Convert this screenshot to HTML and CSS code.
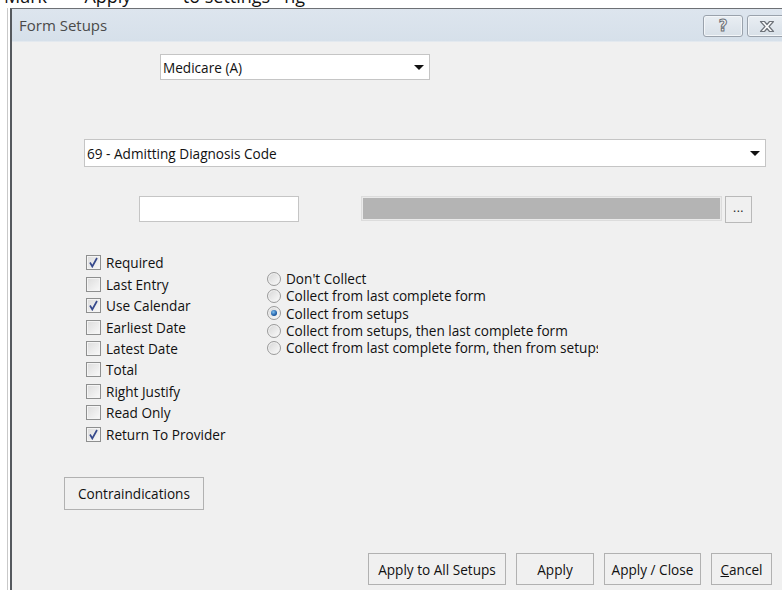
FILE: index.html
```html
<!DOCTYPE html>
<html lang="en">
<head>
<meta charset="utf-8">
<title>Form Setups</title>
<link rel="stylesheet" href="styles.css">
</head>
<body>
  <div class="behind">
    <span class="behind-text">Mark&nbsp;&nbsp;&nbsp;&nbsp;&nbsp;&nbsp;&nbsp;&nbsp;Apply&nbsp;&nbsp;&nbsp;&nbsp;&nbsp;&nbsp;&nbsp;&nbsp;&nbsp;&nbsp;&nbsp;to settings&nbsp;&nbsp;&nbsp;ng</span>
  </div>
  <div class="desk">
    <div class="desk-edge"></div>
    <section class="dialog">
      <header class="titlebar">
        <span class="title">Form Setups</span>
        <div class="caption-buttons">
          <button class="cap-btn help" type="button"><span>?</span></button>
          <button class="cap-btn close" type="button">
            <svg width="16" height="13" viewBox="0 0 16 13"><path d="M1.5 1.5h4l2.5 3 2.5-3h4l-4.5 5 4.5 5h-4l-2.5-3-2.5 3h-4l4.5-5z" fill="#fdfdfd" stroke="#6f747b" stroke-width="1.2" stroke-linejoin="round"/></svg>
          </button>
        </div>
      </header>

      <div class="content">
        <div class="select select-form">
          <span class="select-text">Medicare (A)</span>
          <span class="arrow"></span>
        </div>

        <div class="select select-field">
          <span class="select-text">69 - Admitting Diagnosis Code</span>
          <span class="arrow"></span>
        </div>

        <div class="value-row">
          <div class="textbox"></div>
          <div class="lookup"></div>
          <button class="ellipsis" type="button">...</button>
        </div>

        <div class="options">
          <ul class="checks">
            <li><span class="check on"></span>Required</li>
            <li><span class="check"></span>Last Entry</li>
            <li><span class="check on"></span>Use Calendar</li>
            <li><span class="check"></span>Earliest Date</li>
            <li><span class="check"></span>Latest Date</li>
            <li><span class="check"></span>Total</li>
            <li><span class="check"></span>Right Justify</li>
            <li><span class="check"></span>Read Only</li>
            <li><span class="check on"></span>Return To Provider</li>
          </ul>
          <ul class="radios">
            <li><span class="radio"></span>Don't Collect</li>
            <li><span class="radio"></span>Collect from last complete form</li>
            <li><span class="radio on"></span>Collect from setups</li>
            <li><span class="radio"></span>Collect from setups, then last complete form</li>
            <li><span class="radio"></span>Collect from last complete form, then from setups</li>
          </ul>
        </div>

        <button class="btn contra" type="button">Contraindications</button>

        <div class="actions">
          <button class="btn all" type="button">Apply to All Setups</button>
          <button class="btn apply" type="button">Apply</button>
          <button class="btn close-apply" type="button">Apply / Close</button>
          <button class="btn cancel" type="button"><u>C</u>ancel</button>
        </div>
      </div>
    </section>
  </div>
</body>
</html>
```
FILE: styles.css
```css
html, body {
  margin: 0;
  padding: 0;
  background: #ffffff;
  overflow: hidden;
  width: 782px;
  height: 590px;
}

body {
  font-family: "Open Sans", "Noto Sans", sans-serif;
  font-size: 13.6px;
  color: #111;
}

/* window partially hidden behind the dialog: only the bottoms of its letters show */
.behind {
  height: 8px;
  overflow: hidden;
  white-space: nowrap;
}

.behind-text {
  display: block;
  font-size: 18px;
  line-height: 0;
  transform: translateY(-4px);
  padding-left: 4px;
  color: #111;
}

.desk {
  display: flex;
  height: 582px;
}

.desk-edge {
  width: 10px;
  flex: none;
  background: linear-gradient(to right, #fff 0 7px, #c9c9c9 7px 8px, #fff 8px);
}

.dialog {
  flex: none;
  width: 800px;
  border-left: 2px solid #55595e;
  border-top: 1px solid #6d7075;
  background: #f0f0f0;
}

.titlebar {
  height: 33px;
  display: flex;
  align-items: center;
  justify-content: space-between;
  background: linear-gradient(#dde5ee, #d6e0ea);
  border-bottom: 1px solid #e3e9ef;
  box-sizing: border-box;
}

.title {
  padding-left: 7px;
  font-size: 15px;
  color: #4a4a4a;
  margin-top: -1px;
}

.caption-buttons {
  display: flex;
  gap: 4px;
  margin-right: 25px;
  margin-top: 2px;
}

.cap-btn {
  height: 22px;
  width: 40px;
  padding: 0;
  border: 1px solid #9aa2ac;
  border-radius: 3px;
  background: linear-gradient(#e9eef3, #d8e0e8);
  box-shadow: inset 0 0 0 1px #f3f6f9;
  display: flex;
  align-items: center;
  justify-content: center;
}

.cap-btn.help span {
  font-family: "DejaVu Sans", sans-serif;
  font-weight: bold;
  font-size: 15px;
  color: #f6f6f6;
  -webkit-text-stroke: 1px #6c7178;
  line-height: 1;
}

/* drop-down lists */
.select {
  box-sizing: border-box;
  background: #fff;
  border: 1px solid #c5c5c5;
  display: flex;
  align-items: center;
  justify-content: space-between;
  padding-left: 2px;
  padding-right: 5px;
}

.select-text {
  color: #111;
}

.arrow {
  width: 0;
  height: 0;
  border-left: 5px solid transparent;
  border-right: 5px solid transparent;
  border-top: 5px solid #111;
}

.select-form {
  margin-top: 12px;
  margin-left: 148px;
  width: 270px;
  height: 26px;
}

.select-field {
  margin-top: 59px;
  margin-left: 72px;
  width: 682px;
  height: 28px;
}

.value-row {
  display: flex;
  align-items: flex-start;
  margin-top: 29px;
  margin-left: 127px;
}

.textbox {
  width: 160px;
  height: 26px;
  box-sizing: border-box;
  background: #fff;
  border: 1px solid #c5c5c5;
}

.lookup {
  margin-left: 62px;
  width: 361px;
  height: 25px;
  box-sizing: border-box;
  background: #b4b4b4;
  border: 1px solid #dcdcdc;
  box-shadow: inset 0 0 0 1px #eaeaea;
}

.ellipsis {
  margin-left: 3px;
  width: 27px;
  height: 27px;
  padding: 0 0 4px;
  box-sizing: border-box;
  background: #f0f0f0;
  border: 1px solid #b9b9b9;
  font-family: inherit;
  font-size: 12px;
  color: #222;
  letter-spacing: 0.5px;
}

/* option lists */
.options {
  display: flex;
  margin-top: 29px;
  margin-left: 74px;
}

.checks, .radios {
  list-style: none;
  margin: 0;
  padding: 0;
}

.checks {
  width: 181px;
  flex: none;
}

.checks li {
  height: 21.46px;
  display: flex;
  align-items: center;
  gap: 5px;
  white-space: nowrap;
}

.check {
  width: 15px;
  height: 15px;
  box-sizing: border-box;
  border: 1px solid #8e8f8f;
  background: linear-gradient(135deg, #dcdcdc, #f9f9f9);
  box-shadow: inset 0 0 0 1px #f4f4f4;
  flex: none;
  position: relative;
}

.check.on::after {
  content: "";
  position: absolute;
  left: 2px;
  top: 1px;
  width: 9px;
  height: 11px;
  background: url("data:image/svg+xml;utf8,<svg xmlns='http://www.w3.org/2000/svg' width='9' height='11' viewBox='0 0 9 11'><path d='M1 5.5 L3.3 9.5 L8 1' fill='none' stroke='%2336498c' stroke-width='1.7'/></svg>") no-repeat;
}

.radios {
  margin-top: 18px;
  width: 331px;
  overflow: hidden;
}

.radios li {
  height: 17.3px;
  display: flex;
  align-items: center;
  gap: 5px;
  white-space: nowrap;
}

.radio {
  width: 14px;
  height: 14px;
  box-sizing: border-box;
  border-radius: 50%;
  border: 1px solid #9a9a9a;
  background: linear-gradient(135deg, #d6d6d6, #fbfbfb);
  box-shadow: inset 0 0 0 1px #f2f2f2;
  flex: none;
  position: relative;
}

.radio.on::after {
  content: "";
  position: absolute;
  left: 3px;
  top: 3px;
  width: 6px;
  height: 6px;
  border-radius: 50%;
  background: radial-gradient(circle at 40% 35%, #7fc0f0, #1f5fa8 60%, #163f78);
}

/* push buttons */
.btn {
  box-sizing: border-box;
  background: #f0f0f0;
  border: 1px solid #b1b1b1;
  font-family: inherit;
  font-size: 13.6px;
  color: #111;
  padding: 0;
}

.contra {
  display: block;
  margin-top: 32px;
  margin-left: 52px;
  width: 140px;
  height: 33px;
}

.actions {
  display: flex;
  gap: 10px;
  margin-top: 43px;
  margin-left: 356px;
}

.actions .btn {
  height: 32px;
}

.all { width: 138px; }
.apply { width: 78px; }
.close-apply { width: 97px; }
.cancel { width: 61px; }
```
